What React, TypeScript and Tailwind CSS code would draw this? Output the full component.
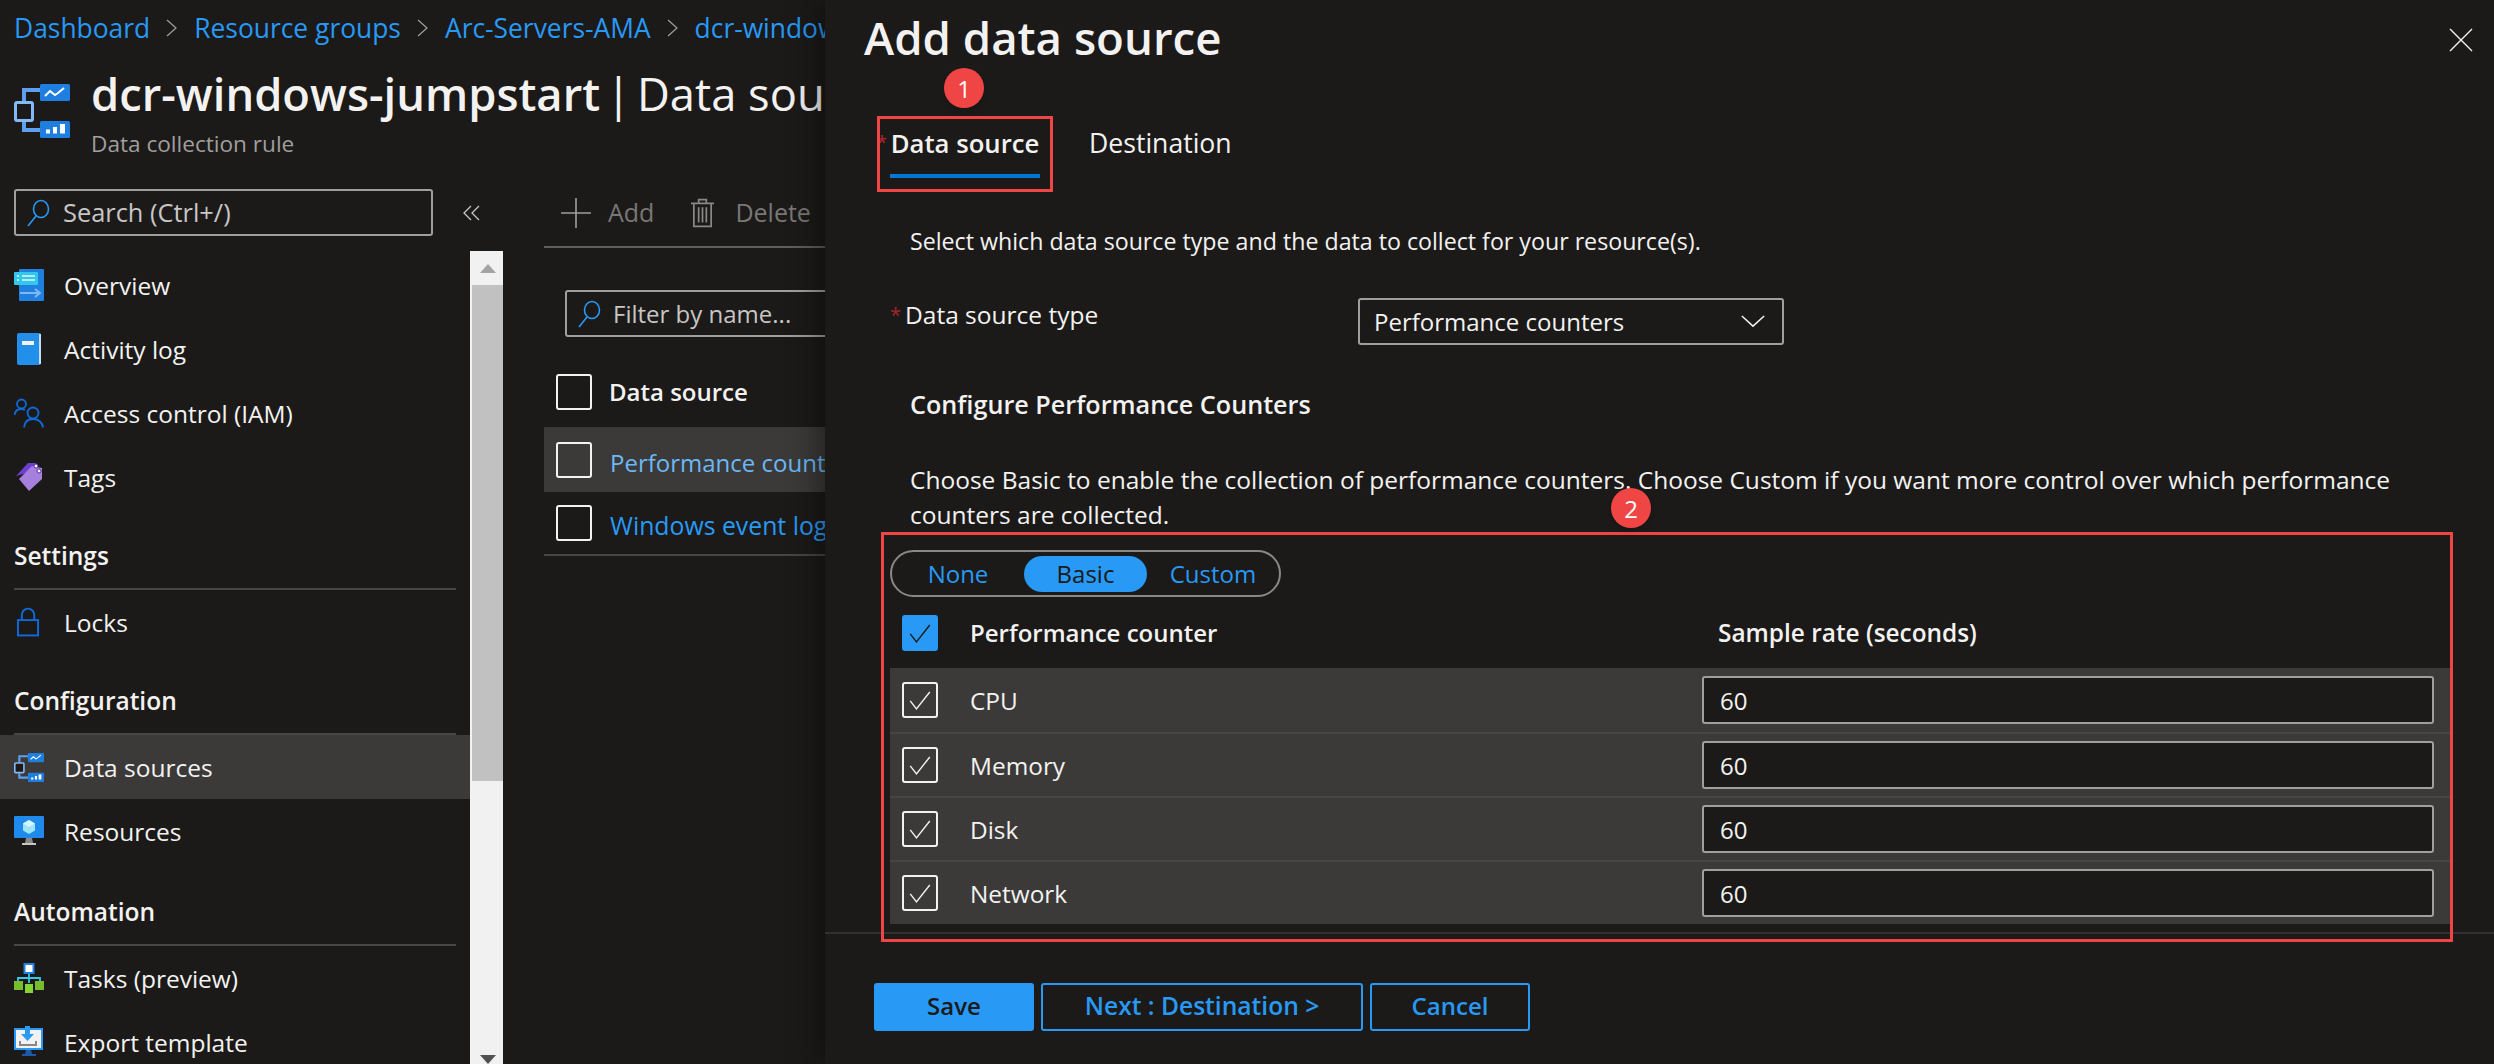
import { type ReactNode } from 'react';

function SearchIcon({ className }: { className: string }): ReactNode {
  return (
    <svg viewBox="0 0 24 28" className={className} fill="none" stroke="#2899f5" strokeWidth="1.6">
      <ellipse cx="15" cy="10" rx="7.5" ry="8.5" />
      <path d="M10 17 L2 27" />
    </svg>
  );
}

function CheckMark({ color = '#f3f2f1' }: { color?: string }): ReactNode {
  return (
    <svg viewBox="0 0 36 36" className="h-full w-full" fill="none" stroke={color} strokeWidth="1.6">
      <path d="M7 19 L14 28 L29 9" />
    </svg>
  );
}

function DcrIcon({ className }: { className: string }): ReactNode {
  return (
    <svg viewBox="0 0 56 54" className={className} fill="none">
      <path d="M10 17 V6 H28 M10 38 V46 H28" stroke="#5ea0ef" strokeWidth="4" />
      <rect x="1.5" y="18.5" width="17" height="18" rx="1.5" stroke="#83b9f9" strokeWidth="3" fill="#1b1a19" />
      <rect x="26" y="0" width="30" height="17" rx="1.5" fill="#1f7fe0" />
      <rect x="26" y="37" width="30" height="17" rx="1.5" fill="#1f7fe0" />
      <path d="M31 12 L36 7 L41 11 L44 9 L50 4" stroke="#fff" strokeWidth="2" />
      <path d="M32 45.5h4v4h-4z M39 43h4v6.5h-4z M46 40h5v9.5h-5z" fill="#fff" />
    </svg>
  );
}

function OverviewIcon(): ReactNode {
  return (
    <svg viewBox="0 0 30 32" className="h-[32px] w-[30px]">
      <rect x="5" y="0" width="25" height="32" rx="1" fill="#1f80e0" />
      <path d="M6 24 H24 M21 20 L26 24 L21 28" stroke="#83b9f9" strokeWidth="2" fill="none" />
      <rect x="0" y="3" width="24" height="13" rx="1" fill="#32c8ee" />
      <path d="M8 7 H21 M8 11 H21 M3 7 H5 M3 11 H5" stroke="#e6f8fd" strokeWidth="1.5" />
    </svg>
  );
}

function ActivityIcon(): ReactNode {
  return (
    <svg viewBox="0 0 26 32" className="ml-[2px] h-[32px] w-[26px]">
      <rect x="1" y="0" width="24" height="32" rx="2" fill="#2290ea" />
      <path d="M24 1 V31" stroke="#f3f2f1" strokeWidth="1.6" />
      <rect x="6" y="8" width="12" height="4" fill="#f3f2f1" />
    </svg>
  );
}

function UsersIcon(): ReactNode {
  return (
    <svg viewBox="0 0 30 30" className="h-[30px] w-[30px]" fill="none" stroke="#0f6adc" strokeWidth="1.8">
      <circle cx="7.5" cy="6" r="4.5" />
      <path d="M0.5 17 C1 13 4 11 7.5 11 C9 11 10 11.3 11 12" />
      <circle cx="19" cy="15" r="5.5" />
      <path d="M10 29.5 C10.5 24 14 21 19 21 C24 21 28.5 24 29 29.5" />
    </svg>
  );
}

function TagIcon(): ReactNode {
  return (
    <svg viewBox="0 0 28 30" className="ml-[2px] h-[30px] w-[28px]">
      <path d="M0 14 L12 1 H20 L21 8 Z" fill="#6d3fd0" />
      <path d="M3 17 L16 4 L26 6 L26 17 L13 29 Z" fill="#a77fdc" />
      <circle cx="20" cy="4" r="2" fill="#fff" stroke="#4f2da0" />
      <circle cx="23" cy="9" r="2" fill="#fff" stroke="#4f2da0" />
    </svg>
  );
}

function LockIcon(): ReactNode {
  return (
    <svg viewBox="0 0 24 30" className="ml-[3px] h-[30px] w-[23px]" fill="none" stroke="#0f6adc" strokeWidth="2">
      <rect x="1" y="13" width="21" height="16" />
      <path d="M5 13 V8 C5 4 8 1 11.5 1 C15 1 18 4 18 8 V13" />
    </svg>
  );
}

function ResourcesIcon(): ReactNode {
  return (
    <svg viewBox="0 0 30 30" className="h-[30px] w-[30px]">
      <rect x="0" y="0" width="30" height="22" rx="1" fill="#1f8aeb" />
      <path d="M12 22 H18 L19 27 H11 Z" fill="#8a8886" />
      <rect x="8" y="27" width="14" height="2" fill="#c8c6c4" />
      <path d="M15 4 L21 7.5 V14.5 L15 18 L9 14.5 V7.5 Z" fill="#9be5f7" />
      <path d="M15 11 L21 7.5 L15 4 L9 7.5 Z" fill="#d5f5fc" />
    </svg>
  );
}

function TasksIcon(): ReactNode {
  return (
    <svg viewBox="0 0 30 30" className="h-[30px] w-[30px]">
      <path d="M15 10 V20 M4 20 V15 H26 V20" stroke="#32c8ee" strokeWidth="1.8" fill="none" />
      <rect x="10.5" y="1" width="9" height="9" fill="#fff" stroke="#1f80e0" strokeWidth="2" />
      <rect x="0" y="18" width="9" height="9" fill="#76bc2d" />
      <rect x="11" y="21" width="8" height="9" fill="#86d633" />
      <rect x="21" y="18" width="9" height="9" fill="#76bc2d" />
    </svg>
  );
}

function ExportIcon(): ReactNode {
  return (
    <svg viewBox="0 0 30 32" className="h-[32px] w-[30px]">
      <rect x="1" y="3" width="27" height="20" fill="#f3f2f1" stroke="#2899f5" strokeWidth="2" />
      <path d="M11 0 H16 V8 H20 L13.5 15 L7 8 H11 Z" fill="#2b9bf0" />
      <path d="M6 15 V19 H22 V15" stroke="#8a8886" strokeWidth="2" fill="none" />
      <path d="M12 24 H17 L18 28 H22 V30 H8 V28 H11 Z" fill="#1a5aa8" />
    </svg>
  );
}

function NavRow({ icon, label, active }: { icon: ReactNode; label: string; active?: boolean }): ReactNode {
  return (
    <div className={`flex h-[64px] items-center text-[24.5px] ${active ? 'bg-[#3b3a39]' : ''}`}>
      <div className="flex w-[64px] shrink-0 justify-start pl-[14px]">{icon}</div>
      <span className="text-[#f3f2f1]">{label}</span>
    </div>
  );
}

function NavHeader({ label, tall }: { label: string; tall?: boolean }): ReactNode {
  return (
    <div className={`mx-[14px] flex items-end border-b-2 border-[#484644] pb-[16px] text-[24.5px] font-semibold text-[#f3f2f1] ${tall ? 'h-[83px]' : 'h-[81px]'}`}>
      {label}
    </div>
  );
}

function Box({ checked, blue }: { checked?: boolean; blue?: boolean }): ReactNode {
  return (
    <div className={`h-[36px] w-[36px] shrink-0 rounded-[3px] border-2 ${blue ? 'border-[#2899f5] bg-[#2899f5]' : 'border-[#f3f2f1]'}`}>
      {checked ? <CheckMark color={blue ? '#1b1a19' : '#f3f2f1'} /> : null}
    </div>
  );
}

function Sidebar(): ReactNode {
  return (
    <div className="flex w-[503px] shrink-0 flex-col">
      <div className="flex h-[47px] items-center">
        <div className="ml-[14px] flex h-[47px] w-[419px] items-center rounded-[3px] border-2 border-[#a19f9d] pl-[10px] text-[25.4px] text-[#c8c6c4]">
          <SearchIcon className="mr-[13px] h-[28px] w-[24px]" />
          Search (Ctrl+/)
        </div>
        <svg viewBox="0 0 18 16" className="ml-[30px] h-[16px] w-[18px]" fill="none" stroke="#c8c6c4" strokeWidth="1.3">
          <path d="M8 1 L1 8 L8 15 M16 1 L9 8 L16 15" />
        </svg>
      </div>
      <div className="mt-[15px] flex min-h-0 flex-1">
        <div className="w-[470px] pt-[2px]">
          <NavRow icon={<OverviewIcon />} label="Overview" />
          <NavRow icon={<ActivityIcon />} label="Activity log" />
          <NavRow icon={<UsersIcon />} label="Access control (IAM)" />
          <NavRow icon={<TagIcon />} label="Tags" />
          <NavHeader label="Settings" />
          <NavRow icon={<LockIcon />} label="Locks" />
          <NavHeader label="Configuration" />
          <NavRow icon={<DcrIcon className="h-[31px] w-[30px]" />} label="Data sources" active />
          <NavRow icon={<ResourcesIcon />} label="Resources" />
          <NavHeader label="Automation" tall />
          <NavRow icon={<TasksIcon />} label="Tasks (preview)" />
          <NavRow icon={<ExportIcon />} label="Export template" />
        </div>
        <div className="flex w-[33px] flex-col border-l-2 border-[#f3f2f1] bg-[#f1f1f1]">
          <div className="flex h-[34px] items-center justify-center">
            <div className="h-0 w-0 border-x-[8px] border-b-[9px] border-x-transparent border-b-[#a3a3a3]" />
          </div>
          <div className="h-[496px] bg-[#c1c1c1]" />
          <div className="flex flex-1 items-end justify-center">
            <div className="h-0 w-0 border-x-[8px] border-t-[9px] border-x-transparent border-t-[#505050]" />
          </div>
        </div>
      </div>
    </div>
  );
}

function ContentPane(): ReactNode {
  return (
    <div className="ml-[41px] flex w-[400px] shrink-0 flex-col">
      <div className="flex h-[59px] items-start border-b-2 border-[#605e5c] text-[25px] text-[#797775]">
        <div className="flex h-[47px] items-center whitespace-nowrap">
          <svg viewBox="0 0 30 30" className="ml-[17px] mr-[17px] h-[30px] w-[30px]" fill="none" stroke="#a19f9d" strokeWidth="1.6">
            <path d="M15 0 V30 M0 15 H30" />
          </svg>
          Add
          <svg viewBox="0 0 26 32" className="ml-[36px] mr-[20px] h-[32px] w-[25px]" fill="none" stroke="#8a8886" strokeWidth="1.8">
            <path d="M1 6 H25 M9 6 V2 H17 V6 M4 6 V30 H22 V6 M9 10 V26 M13 10 V26 M17 10 V26" />
          </svg>
          Delete
        </div>
      </div>
      <div className="ml-[21px] mt-[42px] flex h-[47px] items-center rounded-[3px] border-2 border-[#a19f9d] pl-[10px] text-[#c8c6c4]">
        <SearchIcon className="mr-[12px] h-[28px] w-[24px]" />
        Filter by name...
      </div>
      <div className="ml-[12px] mt-[37px] flex h-[35px] items-center">
        <Box />
        <span className="ml-[17px] font-semibold text-[#f3f2f1]">Data source</span>
      </div>
      <div className="mt-[18px] flex h-[65px] items-center whitespace-nowrap bg-[#3b3a39] pl-[12px] text-[#6cb8f6]">
        <Box />
        <span className="ml-[18px] mt-[5px]">Performance counters</span>
      </div>
      <div className="flex h-[64px] items-center whitespace-nowrap border-b-2 border-[#484644] pl-[12px] text-[24.8px] text-[#2899f5]">
        <Box />
        <span className="ml-[18px] mt-[5px]">Windows event logs</span>
      </div>
    </div>
  );
}

function Crumb({ label, last }: { label: string; last?: boolean }): ReactNode {
  return (
    <>
      <span className="text-[26.4px] text-[#2899f5]">{label}</span>
      {last ? null : (
        <svg viewBox="0 0 12 18" className="mx-[16px] h-[18px] w-[12px] shrink-0" fill="none" stroke="#a19f9d" strokeWidth="1.2">
          <path d="M1 1 L10 9 L1 17" />
        </svg>
      )}
    </>
  );
}

function BackgroundPage(): ReactNode {
  return (
    <div className="flex w-[825px] shrink-0 flex-col overflow-hidden whitespace-nowrap">
      <div className="flex h-[56px] shrink-0 items-center pl-[14px]">
        <Crumb label="Dashboard" />
        <Crumb label="Resource groups" />
        <Crumb label="Arc-Servers-AMA" />
        <Crumb label="dcr-windows-jumpstart" last />
      </div>
      <div className="flex h-[133px] shrink-0 pl-[14px] pt-[28px]">
        <DcrIcon className="h-[54px] w-[56px] shrink-0" />
        <div className="-mt-[21px] ml-[21px]">
          <div className="h-[62px] text-[45.3px] leading-[62px] font-semibold text-[#f3f2f1]">
            <span>dcr-windows-jumpstart</span>
            <span className="ml-[6px] font-normal">|</span>
            <span className="ml-[6px] font-normal">Data sources</span>
          </div>
          <div className="mt-[2px] text-[22.6px] text-[#a19f9d]">Data collection rule</div>
        </div>
      </div>
      <div className="flex min-h-0 flex-1">
        <Sidebar />
        <ContentPane />
      </div>
    </div>
  );
}

const COUNTERS = ['CPU', 'Memory', 'Disk', 'Network'];

function CounterRow({ name }: { name: string }): ReactNode {
  return (
    <div className="flex h-[64px] items-center border-t-2 border-[#484644] bg-[#3b3a39] pl-[12px] first:border-t-0">
      <Box checked />
      <span className="ml-[32px] w-[732px] text-[24.4px] text-[#f3f2f1]">{name}</span>
      <div className="flex h-[48px] w-[732px] items-center rounded-[3px] border-2 border-[#a19f9d] bg-[#1b1a19] pl-[16px] text-[#f3f2f1]">
        60
      </div>
    </div>
  );
}

function Panel(): ReactNode {
  return (
    <div className="relative z-10 flex min-w-0 flex-1 flex-col bg-[#1b1a19] text-[#f3f2f1] shadow-[-6px_0_30px_rgba(0,0,0,0.45)]">
      <div className="flex h-[74px] shrink-0 items-start justify-between pl-[39px] pr-[21px]">
        <div className="mt-[6px] text-[45.6px] leading-[62px] font-semibold">Add data source</div>
        <svg viewBox="0 0 24 24" className="mt-[28px] h-[24px] w-[24px]" fill="none" stroke="#f3f2f1" strokeWidth="1.4">
          <path d="M1 1 L23 23 M23 1 L1 23" />
        </svg>
      </div>

      <div className="mt-[44px] flex h-[60px] shrink-0 pl-[65px]">
        <div className="relative flex h-[60px] w-[150px] items-start justify-center border-b-4 border-[#0078d4] pt-[9px] text-[25.7px] whitespace-nowrap font-semibold">
          <span className="absolute -left-[13px] top-[8px] text-[18px] text-[#a4262c]">*</span>
          Data source
        </div>
        <div className="ml-[49px] pt-[9px] text-[26.6px]">Destination</div>
      </div>

      <div className="mt-[47px] pl-[85px] text-[23.2px]">Select which data source type and the data to collect for your resource(s).</div>

      <div className="mt-[40px] flex h-[47px] pl-[65px]">
        <div className="flex w-[468px] items-start text-[24.5px]">
          <span className="mr-[4px] text-[20px] text-[#a4262c]">*</span>
          <span>Data source type</span>
        </div>
        <div className="flex w-[426px] items-center justify-between rounded-[3px] border-2 border-[#a19f9d] pl-[14px] pr-[16px]">
          Performance counters
          <svg viewBox="0 0 26 14" className="h-[13px] w-[26px]" fill="none" stroke="#f3f2f1" strokeWidth="1.6">
            <path d="M1 1 L13 12 L25 1" />
          </svg>
        </div>
      </div>

      <div className="mt-[43px] pl-[85px] text-[25.2px] font-semibold">Configure Performance Counters</div>

      <div className="mt-[41px] w-[1580px] pl-[85px] text-[24.5px] leading-[35px]">
        Choose Basic to enable the collection of performance counters. Choose Custom if you want more control over which performance counters are collected.
      </div>

      <div className="ml-[65px] mt-[18px] flex h-[47px] w-[391px] items-center rounded-full border-2 border-[#8a8886] px-[6px] text-[#2899f5]">
        <div className="flex h-[36px] w-[126px] items-center justify-center pr-[6px]">None</div>
        <div className="flex h-[36px] w-[123px] items-center justify-center rounded-full bg-[#2899f5] text-[#1b1a19]">Basic</div>
        <div className="flex h-[36px] flex-1 items-center justify-center pl-[6px]">Custom</div>
      </div>

      <div className="ml-[65px] mt-[18px] flex h-[36px] items-center pl-[12px] font-semibold">
        <Box checked blue />
        <span className="ml-[32px] w-[748px] pb-[2px]">Performance counter</span>
        <span className="pb-[2px] text-[24.4px]">Sample rate (seconds)</span>
      </div>

      <div className="ml-[65px] mr-[43px] mt-[17px] flex flex-col">
        {COUNTERS.map((name) => (
          <CounterRow key={name} name={name} />
        ))}
      </div>

      <div className="mt-[8px] border-t-2 border-[#323130]" />

      <div className="ml-[49px] mt-[49px] flex gap-[7px]">
        <div className="flex h-[48px] w-[160px] items-center justify-center rounded-[3px] bg-[#2899f5] pb-[3px] font-semibold text-[#1b1a19]">Save</div>
        <div className="flex h-[48px] w-[322px] items-center justify-center rounded-[3px] border-2 border-[#2899f5] pb-[3px] text-[24.6px] font-semibold text-[#2899f5]">Next : Destination &gt;</div>
        <div className="flex h-[48px] w-[160px] items-center justify-center rounded-[3px] border-2 border-[#2899f5] pb-[3px] font-semibold text-[#2899f5]">Cancel</div>
      </div>

      {/* callouts drawn over the screenshot */}
      <div className="absolute left-[52px] top-[116px] h-[76px] w-[176px] border-[3px] border-[#f04545]" />
      <div className="absolute left-[119px] top-[68px] flex h-[40px] w-[40px] items-center justify-center rounded-full bg-[#f04545] text-white shadow-md">1</div>
      <div className="absolute left-[56px] top-[532px] h-[410px] w-[1572px] border-[3px] border-[#f04545]" />
      <div className="absolute left-[786px] top-[488px] flex h-[40px] w-[40px] items-center justify-center rounded-full bg-[#f04545] text-white shadow-md">2</div>
    </div>
  );
}

export default function App(): ReactNode {
  return (
    <div className="flex h-[1064px] w-[2494px] overflow-hidden bg-[#1b1a19] font-['Open_Sans',sans-serif] text-[24px] leading-[33px]">
      <BackgroundPage />
      <Panel />
    </div>
  );
}
